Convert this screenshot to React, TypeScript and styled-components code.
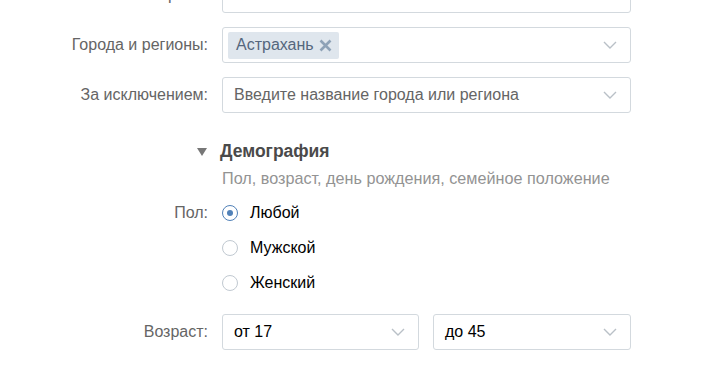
import styled, { createGlobalStyle } from "styled-components"

const GlobalStyle = createGlobalStyle`
  html, body {
    margin: 0;
    padding: 0;
    background: #fff;
    overflow: hidden;
  }
  body {
    font-family: "Liberation Sans", Arial, sans-serif;
    font-size: 16px;
    color: #000;
  }
`

const Page = styled.div`
  width: 722px;
  height: 366px;
  overflow: hidden;
`

const Form = styled.div`
  margin-top: -23px;
  display: flex;
  flex-direction: column;
`

const Row = styled.div<{ $gap?: number }>`
  display: grid;
  grid-template-columns: 208px 409px;
  column-gap: 14px;
  align-items: center;
  margin-bottom: ${(p) => p.$gap ?? 14}px;
`

const Label = styled.div<{ $top?: boolean }>`
  text-align: right;
  color: #656565;
  line-height: ${(p) => (p.$top ? "35px" : "normal")};
  align-self: ${(p) => (p.$top ? "start" : "center")};
`

const Select = styled.div`
  box-sizing: border-box;
  height: 36px;
  border: 1px solid #d3d9de;
  border-radius: 3px;
  display: flex;
  align-items: center;
  padding: 0 13px 0 5px;
  background: #fff;
`

const SelectText = styled.div<{ $placeholder?: boolean }>`
  flex: 1;
  padding-left: 6px;
  color: ${(p) => (p.$placeholder ? "#656565" : "#000")};
  white-space: nowrap;
`

const Tag = styled.div`
  display: flex;
  align-items: center;
  gap: 5px;
  height: 27px;
  padding: 0 7px 0 8px;
  background: #dfe6ed;
  border-radius: 2px;
  color: #55677d;
`

const Chevron = styled.svg`
  flex: none;
`

const AgeFields = styled.div`
  display: grid;
  grid-template-columns: 197px 198px;
  column-gap: 14px;
`

const Section = styled.div`
  margin: 28px 0 0 197px;
`

const SectionHead = styled.div`
  display: flex;
  align-items: center;
  gap: 13px;
  font-weight: bold;
  font-size: 17.5px;
  color: #4a4a4a;
`

const SectionSub = styled.div`
  margin: 7px 0 0 25px;
  color: #939393;
  font-size: 16.2px;
`

const Radios = styled.div`
  display: flex;
  flex-direction: column;
`

const RadioItem = styled.label`
  display: flex;
  align-items: center;
  gap: 12px;
  height: 35px;
`

const RadioCircle = styled.span<{ $checked?: boolean }>`
  box-sizing: border-box;
  width: 16px;
  height: 16px;
  border-radius: 50%;
  border: 1px solid ${(p) => (p.$checked ? "#5181b8" : "#c1c9d1")};
  display: flex;
  align-items: center;
  justify-content: center;

  &::after {
    content: "";
    display: ${(p) => (p.$checked ? "block" : "none")};
    width: 6px;
    height: 6px;
    border-radius: 50%;
    background: #5181b8;
  }
`

const ChevronIcon = () => (
  <Chevron width="14" height="8" viewBox="0 0 14 8">
    <path d="M1 1l6 6 6-6" fill="none" stroke="#b9c0c7" strokeWidth="1.4" />
  </Chevron>
)

const TagClose = () => (
  <svg width="13" height="13" viewBox="0 0 13 13">
    <path d="M1.5 1.5l10 10M11.5 1.5l-10 10" stroke="#8ea2b7" strokeWidth="2.6" />
  </svg>
)

const genders = [
  { name: "Любой", checked: true },
  { name: "Мужской", checked: false },
  { name: "Женский", checked: false },
]

const App = () => {
  return (
    <Page>
      <GlobalStyle />
      <Form>
        <Row>
          <Label>Страна:</Label>
          <Select>
            <SelectText />
          </Select>
        </Row>
        <Row>
          <Label>Города и регионы:</Label>
          <Select>
            <Tag>
              Астрахань
              <TagClose />
            </Tag>
            <SelectText />
            <ChevronIcon />
          </Select>
        </Row>
        <Row $gap={0}>
          <Label>За исключением:</Label>
          <Select>
            <SelectText $placeholder>Введите название города или региона</SelectText>
            <ChevronIcon />
          </Select>
        </Row>

        <Section>
          <SectionHead>
            <svg width="10" height="8" viewBox="0 0 10 8">
              <path d="M0 0h10L5 8z" fill="#777" />
            </svg>
            Демография
          </SectionHead>
          <SectionSub>Пол, возраст, день рождения, семейное положение</SectionSub>
        </Section>

        <Row $gap={0} style={{ marginTop: 7, alignItems: "start" }}>
          <Label $top>Пол:</Label>
          <Radios>
            {genders.map((g) => (
              <RadioItem key={g.name}>
                <RadioCircle $checked={g.checked} />
                {g.name}
              </RadioItem>
            ))}
          </Radios>
        </Row>

        <Row style={{ marginTop: 14 }}>
          <Label>Возраст:</Label>
          <AgeFields>
            <Select>
              <SelectText>от 17</SelectText>
              <ChevronIcon />
            </Select>
            <Select>
              <SelectText>до 45</SelectText>
              <ChevronIcon />
            </Select>
          </AgeFields>
        </Row>
      </Form>
    </Page>
  )
}

export default App
